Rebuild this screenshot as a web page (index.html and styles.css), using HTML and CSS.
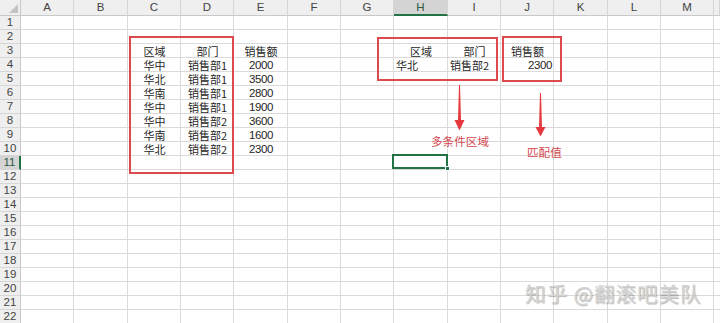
FILE: index.html
```html
<!DOCTYPE html>
<html lang="zh-CN">
<head>
<meta charset="utf-8">
<title>多条件匹配</title>
<link rel="stylesheet" href="styles.css">
</head>
<body>
<div class="sheet">
  <div class="corner"><span class="tri"></span></div>
  <div class="colhead">A</div>
  <div class="colhead">B</div>
  <div class="colhead">C</div>
  <div class="colhead">D</div>
  <div class="colhead">E</div>
  <div class="colhead">F</div>
  <div class="colhead">G</div>
  <div class="colhead active">H</div>
  <div class="colhead">I</div>
  <div class="colhead">J</div>
  <div class="colhead">K</div>
  <div class="colhead">L</div>
  <div class="colhead">M</div>
  <div class="colhead"></div>

  <div class="rowhead">1</div>
  <div class="rowhead">2</div>
  <div class="rowhead">3</div>
  <div class="rowhead">4</div>
  <div class="rowhead">5</div>
  <div class="rowhead">6</div>
  <div class="rowhead">7</div>
  <div class="rowhead">8</div>
  <div class="rowhead">9</div>
  <div class="rowhead">10</div>
  <div class="rowhead active">11</div>
  <div class="rowhead">12</div>
  <div class="rowhead">13</div>
  <div class="rowhead">14</div>
  <div class="rowhead">15</div>
  <div class="rowhead">16</div>
  <div class="rowhead">17</div>
  <div class="rowhead">18</div>
  <div class="rowhead">19</div>
  <div class="rowhead">20</div>
  <div class="rowhead">21</div>
  <div class="rowhead">22</div>

  <div class="body">
    <div class="cell col-c row-3 ctr">区域</div>
    <div class="cell col-d row-3 ctr">部门</div>
    <div class="cell col-e row-3 ctr">销售额</div>

    <div class="cell col-c row-4 ctr">华中</div>
    <div class="cell col-d row-4 ctr">销售部1</div>
    <div class="cell col-e row-4 ctr num">2000</div>

    <div class="cell col-c row-5 ctr">华北</div>
    <div class="cell col-d row-5 ctr">销售部1</div>
    <div class="cell col-e row-5 ctr num">3500</div>

    <div class="cell col-c row-6 ctr">华南</div>
    <div class="cell col-d row-6 ctr">销售部1</div>
    <div class="cell col-e row-6 ctr num">2800</div>

    <div class="cell col-c row-7 ctr">华中</div>
    <div class="cell col-d row-7 ctr">销售部1</div>
    <div class="cell col-e row-7 ctr num">1900</div>

    <div class="cell col-c row-8 ctr">华中</div>
    <div class="cell col-d row-8 ctr">销售部2</div>
    <div class="cell col-e row-8 ctr num">3600</div>

    <div class="cell col-c row-9 ctr">华南</div>
    <div class="cell col-d row-9 ctr">销售部2</div>
    <div class="cell col-e row-9 ctr num">1600</div>

    <div class="cell col-c row-10 ctr">华北</div>
    <div class="cell col-d row-10 ctr">销售部2</div>
    <div class="cell col-e row-10 ctr num">2300</div>

    <div class="cell col-h row-3 ctr">区域</div>
    <div class="cell col-i row-3 ctr">部门</div>
    <div class="cell col-j row-3 ctr">销售额</div>
    <div class="cell col-h row-4">华北</div>
    <div class="cell col-i row-4">销售部2</div>
    <div class="cell col-j row-4 rt num">2300</div>

    <div class="cell col-h row-11 selected"><span class="handle"></span></div>

    <div class="redbox box-source"></div>
    <div class="redbox box-criteria"></div>
    <div class="redbox box-result"></div>

    <svg class="arrow arrow-criteria" width="11" height="46" viewBox="0 0 11 46">
      <polygon points="5,0 6,0 7,35 10.5,35 5.5,45.5 0.5,35 4,35" fill="#e6393e"/>
    </svg>
    <svg class="arrow arrow-result" width="11" height="44" viewBox="0 0 11 44">
      <polygon points="5,0 6,0 7,34 10.5,34 5.5,43.5 0.5,34 4,34" fill="#e6393e"/>
    </svg>

    <div class="label label-criteria">多条件区域</div>
    <div class="label label-result">匹配值</div>

    <div class="watermark">知乎 @翻滚吧美队</div>
  </div>
</div>
</body>
</html>
```

FILE: styles.css
```css
* { box-sizing: border-box; }

html, body {
  margin: 0;
  padding: 0;
  background: #ffffff;
}

.sheet {
  width: 720px;
  height: 323px;
  overflow: hidden;
  display: grid;
  grid-template-columns: 21px repeat(4, 53px 54px 53px) 53px 6px;
  grid-template-rows: 16px repeat(22, 14px);
  font-family: "Liberation Sans", "Noto Sans CJK SC", sans-serif;
  background: #ffffff;
}

.corner {
  position: relative;
  background: #efefef;
  border-right: 1px solid #c9c9c9;
  border-bottom: 1px solid #c9c9c9;
}

.corner .tri {
  position: absolute;
  right: 2px;
  bottom: 2px;
  width: 0;
  height: 0;
  border-left: 9px solid transparent;
  border-bottom: 9px solid #c4c4c4;
}

.colhead {
  background: #efefef;
  border-right: 1px solid #d6d6d6;
  border-bottom: 1px solid #c9c9c9;
  color: #444444;
  font-size: 11.5px;
  line-height: 15px;
  text-align: center;
  overflow: hidden;
}

.colhead.active {
  background: #d4d4d4;
  color: #2c5a43;
  border-bottom: 2px solid #217346;
  line-height: 14px;
}

.rowhead {
  grid-column: 1;
  background: #efefef;
  border-right: 1px solid #c9c9c9;
  border-bottom: 1px solid #d6d6d6;
  color: #444444;
  font-size: 11.5px;
  line-height: 13px;
  text-align: center;
}

.rowhead.active {
  background: #d4d4d4;
  color: #2c5a43;
  border-right: 2px solid #217346;
}

.body {
  grid-column: 2 / -1;
  grid-row: 2 / -1;
  position: relative;
  display: grid;
  grid-template-columns: repeat(4, 53px 54px 53px) 53px 6px;
  grid-template-rows: repeat(22, 14px);
  background-image:
    repeating-linear-gradient(to right,
      transparent 0 52px, #dadada 52px 53px,
      transparent 53px 106px, #dadada 106px 107px,
      transparent 107px 159px, #dadada 159px 160px),
    repeating-linear-gradient(to bottom,
      transparent 0 13px, #dadada 13px 14px);
}

.cell {
  font-family: "Noto Sans CJK SC", "Liberation Sans", sans-serif;
  font-size: 11px;
  line-height: 13px;
  color: #262626;
  padding: 1px 2px 0;
  white-space: nowrap;
}

.cell.ctr { text-align: center; }
.cell.rt { text-align: right; }
.cell.num {
  font-family: "Liberation Sans", "Noto Sans CJK SC", sans-serif;
  letter-spacing: -0.4px;
  font-size: 11.5px;
}

.col-c { grid-column: 3; }
.col-d { grid-column: 4; }
.col-e { grid-column: 5; }
.col-h { grid-column: 8; }
.col-i { grid-column: 9; }
.col-j { grid-column: 10; }

.row-3 { grid-row: 3; }
.row-4 { grid-row: 4; }
.row-5 { grid-row: 5; }
.row-6 { grid-row: 6; }
.row-7 { grid-row: 7; }
.row-8 { grid-row: 8; }
.row-9 { grid-row: 9; }
.row-10 { grid-row: 10; }
.row-11 { grid-row: 11; }

.selected {
  position: relative;
}

.selected::after {
  content: "";
  position: absolute;
  left: -2px;
  top: -2px;
  right: 0;
  bottom: 1px;
  border: 2px solid #217346;
}

.selected .handle {
  position: absolute;
  right: -2px;
  bottom: -1px;
  width: 5px;
  height: 5px;
  background: #217346;
  border: 1px solid #ffffff;
  z-index: 2;
}

.redbox {
  position: absolute;
  border: 2px solid #dc4a4f;
}

.box-source {
  left: 108px;
  top: 20px;
  width: 105px;
  height: 138px;
}

.box-criteria {
  left: 356px;
  top: 21px;
  width: 121px;
  height: 44px;
}

.box-result {
  left: 481px;
  top: 20px;
  width: 60px;
  height: 46px;
}

.arrow {
  position: absolute;
  display: block;
}

.arrow-criteria {
  left: 433px;
  top: 69px;
}

.arrow-result {
  left: 514px;
  top: 77px;
}

.label {
  position: absolute;
  font-family: "Noto Sans CJK SC", sans-serif;
  font-size: 11.6px;
  line-height: 14px;
  color: #d2494f;
  white-space: nowrap;
}

.label-criteria {
  left: 410px;
  top: 118px;
}

.label-result {
  left: 506px;
  top: 129px;
}

.watermark {
  position: absolute;
  left: 504px;
  top: 264px;
  font-family: "Noto Sans CJK SC", sans-serif;
  font-size: 20.5px;
  line-height: 26px;
  letter-spacing: 1px;
  color: #d3d3d3;
  text-shadow: 1px 1px 1px rgba(0, 0, 0, 0.28);
  white-space: nowrap;
}
```
